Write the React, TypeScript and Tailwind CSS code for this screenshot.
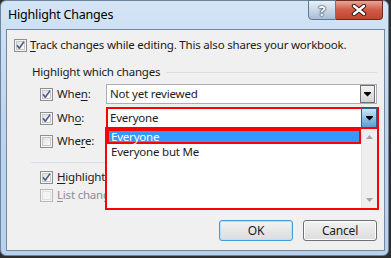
import React from 'react';

const font = { fontFamily: '"Segoe UI", "Noto Sans", Arial, sans-serif', letterSpacing: '-0.2px' };

const Check = ({ checked = false, disabled = false }: { checked?: boolean; disabled?: boolean }) => (
    <svg width="13" height="13" viewBox="0 0 13 13" className="shrink-0">
        <defs>
            <linearGradient id="cbg" x1="0" y1="0" x2="1" y2="1">
                <stop offset="0" stopColor="#dcdcdc" />
                <stop offset="1" stopColor="#ffffff" />
            </linearGradient>
        </defs>
        <rect x="0.5" y="0.5" width="12" height="12" fill="#f4f4f4" stroke={disabled ? '#b8b8b8' : '#8e8f8f'} />
        <rect x="2.5" y="2.5" width="8" height="8" fill={disabled ? '#f4f4f4' : 'url(#cbg)'} stroke={disabled ? '#e0e0e0' : '#c9c9c9'} />
        {checked && (
            <path d="M3 6.2 L5.3 9.2 L10 2.6" fill="none" stroke="#4a5c8c" strokeWidth="1.6" strokeLinejoin="round" />
        )}
    </svg>
);

const Arrow = ({ color = '#000' }: { color?: string }) => (
    <svg width="7" height="5" viewBox="0 0 7 5">
        <rect x="0" y="0" width="7" height="1" fill={color} />
        <path d="M0 1 H7 L3.5 4.5 Z" fill={color} />
    </svg>
);

const Label = ({ text, u }: { text: string; u: number }) => (
    <span className="whitespace-nowrap">
        {text.slice(0, u)}
        <span className="underline underline-offset-2">{text[u]}</span>
        {text.slice(u + 1)}
    </span>
);

export default function App() {
    return (
        <div className="relative w-[391px] h-[258px] bg-[#2e2e2e] text-[11.5px] text-[#1b1b1b]" style={font}>
            <div className="w-[389px] h-[256px] rounded-[6px] bg-gradient-to-b from-[#d3e4f5] via-[#bcd4ee] to-[#b7d1ee] border border-[#6d849c] flex flex-col">
                {/* title bar */}
                <div className="h-[28px] flex items-start justify-between">
                    <span className="mt-[5px] ml-[7px] text-[12.5px] text-black">Highlight Changes</span>
                    <div className="flex mr-[5px] -mt-px">
                        <div className="w-[28px] h-[20px] rounded-bl-[4px] border border-[#5f7894] bg-gradient-to-b from-[#e9f0f8] via-[#c9d7e7] to-[#a9bed6] flex items-center justify-center text-[14px] font-bold text-white" style={{ textShadow: '0 0 1px #2b3a4d, 0 0 1px #2b3a4d, 0 0 2px #2b3a4d' }}>
                            ?
                        </div>
                        <div className="w-[47px] h-[20px] rounded-br-[4px] border border-l-0 border-[#6b2b22] bg-gradient-to-b from-[#e8a595] via-[#cf5a45] to-[#c2452f] flex items-center justify-center">
                            <svg width="16" height="12" viewBox="0 0 16 12">
                                <path d="M3 2 L13 10 M13 2 L3 10" stroke="#3a1a14" strokeWidth="4.4" strokeLinecap="round" />
                                <path d="M3 2 L13 10 M13 2 L3 10" stroke="#ffffff" strokeWidth="2.4" strokeLinecap="round" />
                            </svg>
                        </div>
                    </div>
                </div>

                {/* client area */}
                <div className="ml-[5px] w-[379px] h-[222px] border border-[#75879a] bg-[#f0f0f0] flex flex-col">
                    <div className="h-[20px] mt-[5px] pl-[7px] flex items-center gap-[3px]">
                        <Check checked />
                        <Label text="Track changes while editing. This also shares your workbook." u={0} />
                    </div>

                    <div className="h-[20px] mt-[7px] pl-[25px] pr-[7px] flex items-center gap-[6px]">
                        <span className="whitespace-nowrap">Highlight which changes</span>
                        <div className="flex-1 h-px bg-[#d5dfe5]" />
                    </div>

                    <div className="h-[24px] flex items-center">
                        <div className="w-[99px] pl-[33px] flex items-center gap-[4px]">
                            <Check checked />
                            <Label text="When:" u={3} />
                        </div>
                        <div className="w-[271px] h-[20px] bg-white border border-[#abadb3] flex items-center pl-[3px] pr-px justify-between">
                            <span>Not yet reviewed</span>
                            <div className="w-[15px] h-[18px] border border-[#707070] bg-gradient-to-b from-[#f2f2f2] to-[#d4d4d4] flex items-center justify-center">
                                <Arrow />
                            </div>
                        </div>
                    </div>

                    <div className="h-[24px] flex items-center">
                        <div className="w-[99px] pl-[33px] flex items-center gap-[4px]">
                            <Check checked />
                            <Label text="Who:" u={2} />
                        </div>
                        <div className="relative w-[273px] h-[22px] border-2 border-[#ff0000] bg-white flex items-center pl-[2px] justify-between">
                            <span>Everyone</span>
                            <div className="w-[16px] h-[20px] border border-[#2c628b] bg-gradient-to-b from-[#c8e6f7] via-[#8ec4e6] to-[#5c9fcb] flex items-center justify-center">
                                <Arrow />
                            </div>
                            {/* open list */}
                            <div className="absolute z-10 left-[-3px] right-[-2px] top-[18px] h-[83px] border-2 border-[#ff0000] bg-white flex">
                                <div className="flex-1 flex flex-col leading-[13px]">
                                    <div className="h-[15px] border-2 border-[#ff0000] bg-[#3399ff] text-white flex items-center pl-[2px]">Everyone</div>
                                    <div className="h-[14px] flex items-center pl-[4px]">Everyone but Me</div>
                                </div>
                                <div className="w-[16px] bg-[#eeeeee] border-l border-[#e4e4e4] flex flex-col items-center justify-between py-[6px]">
                                    <svg width="7" height="4" viewBox="0 0 7 4"><path d="M0 4 L3.5 0 L7 4 Z" fill="#a4a4a4" /></svg>
                                    <svg width="7" height="4" viewBox="0 0 7 4"><path d="M0 0 L3.5 4 L7 0 Z" fill="#a4a4a4" /></svg>
                                </div>
                            </div>
                        </div>
                    </div>

                    <div className="h-[22px] flex items-center">
                        <div className="w-[99px] pl-[33px] flex items-center gap-[4px]">
                            <Check />
                            <Label text="Where:" u={3} />
                        </div>
                    </div>

                    <div className="mt-[10px] ml-[24px] mr-[7px] h-px bg-[#d5dfe5]" />

                    <div className="h-[20px] mt-[4px] pl-[33px] flex items-center gap-[4px]">
                        <Check checked />
                        <Label text="Highlight changes on screen" u={0} />
                    </div>
                    <div className="h-[16px] pl-[33px] flex items-center gap-[4px] text-[#8d8d8d]">
                        <Check disabled />
                        <Label text="List changes on a new sheet" u={0} />
                    </div>

                    <div className="mt-[17px] pr-[7px] flex justify-end gap-[10px]">
                        <button className="w-[74px] h-[21px] rounded-[3px] border border-[#3c9ee0] bg-gradient-to-b from-[#f2f2f2] to-[#dcdcdc] shadow-[inset_0_0_0_1px_#b7e3f9] text-[12px]">OK</button>
                        <button className="w-[74px] h-[21px] rounded-[3px] border border-[#707070] bg-gradient-to-b from-[#f2f2f2] to-[#dcdcdc] shadow-[inset_0_0_0_1px_#fcfcfc] text-[12px]">Cancel</button>
                    </div>
                </div>
            </div>
        </div>
    );
}
